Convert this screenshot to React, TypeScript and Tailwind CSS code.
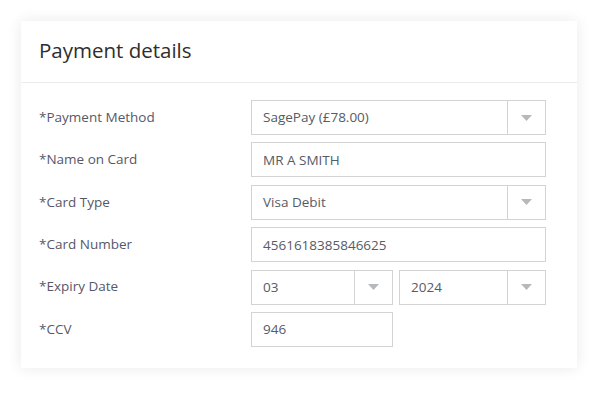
import React from "react";

const font = { fontFamily: '"Open Sans", "Noto Sans", Arial, sans-serif' };

function Caret() {
  return (
    <svg width="11" height="6" viewBox="0 0 11 6">
      <path d="M0 0 L11 0 L5.5 6 Z" fill="#b5b9bd" />
    </svg>
  );
}

function Select({ value, className = "" }: { value: string; className?: string }) {
  return (
    <div className={`flex h-[35px] border border-[#d3d3d3] bg-white ${className}`}>
      <div className="flex flex-1 items-center pl-[11px] text-[13.5px] text-[#555c66]">{value}</div>
      <div className="flex w-[38px] items-center justify-center border-l border-[#d3d3d3]">
        <Caret />
      </div>
    </div>
  );
}

function Input({ value, className = "" }: { value: string; className?: string }) {
  return (
    <div className={`flex h-[35px] items-center border border-[#d3d3d3] bg-white pl-[11px] text-[13.5px] text-[#555c66] ${className}`}>
      {value}
    </div>
  );
}

function Row({ label, children }: { label: string; children: React.ReactNode }) {
  return (
    <div className="flex items-center">
      <div className="w-[212px] text-[13.5px] text-[#575768] -mt-[1px]">{label}</div>
      <div className="w-[295px]">{children}</div>
    </div>
  );
}

export default function App() {
  return (
    <div className="h-[395px] w-[600px] bg-white pt-[21px] pl-[21px]" style={font}>
      <div className="w-[556px] h-[347px] bg-white shadow-[0_0_14px_rgba(0,0,0,0.09)]">
        <div className="flex h-[62px] items-center border-b border-[#ececec] pl-[18px] pb-[2px] text-[20.5px] text-[#2e2e2e]">
          Payment details
        </div>
        <div className="flex flex-col gap-[7.4px] pl-[18px] pt-[17px]">
          <Row label="*Payment Method">
            <Select value="SagePay (£78.00)" />
          </Row>
          <Row label="*Name on Card">
            <Input value="MR A SMITH" />
          </Row>
          <Row label="*Card Type">
            <Select value="Visa Debit" />
          </Row>
          <Row label="*Card Number">
            <Input value="4561618385846625" />
          </Row>
          <Row label="*Expiry Date">
            <div className="flex gap-[6px]">
              <Select value="03" className="w-[142px]" />
              <Select value="2024" className="w-[147px]" />
            </div>
          </Row>
          <Row label="*CCV">
            <Input value="946" className="w-[142px]" />
          </Row>
        </div>
      </div>
    </div>
  );
}
